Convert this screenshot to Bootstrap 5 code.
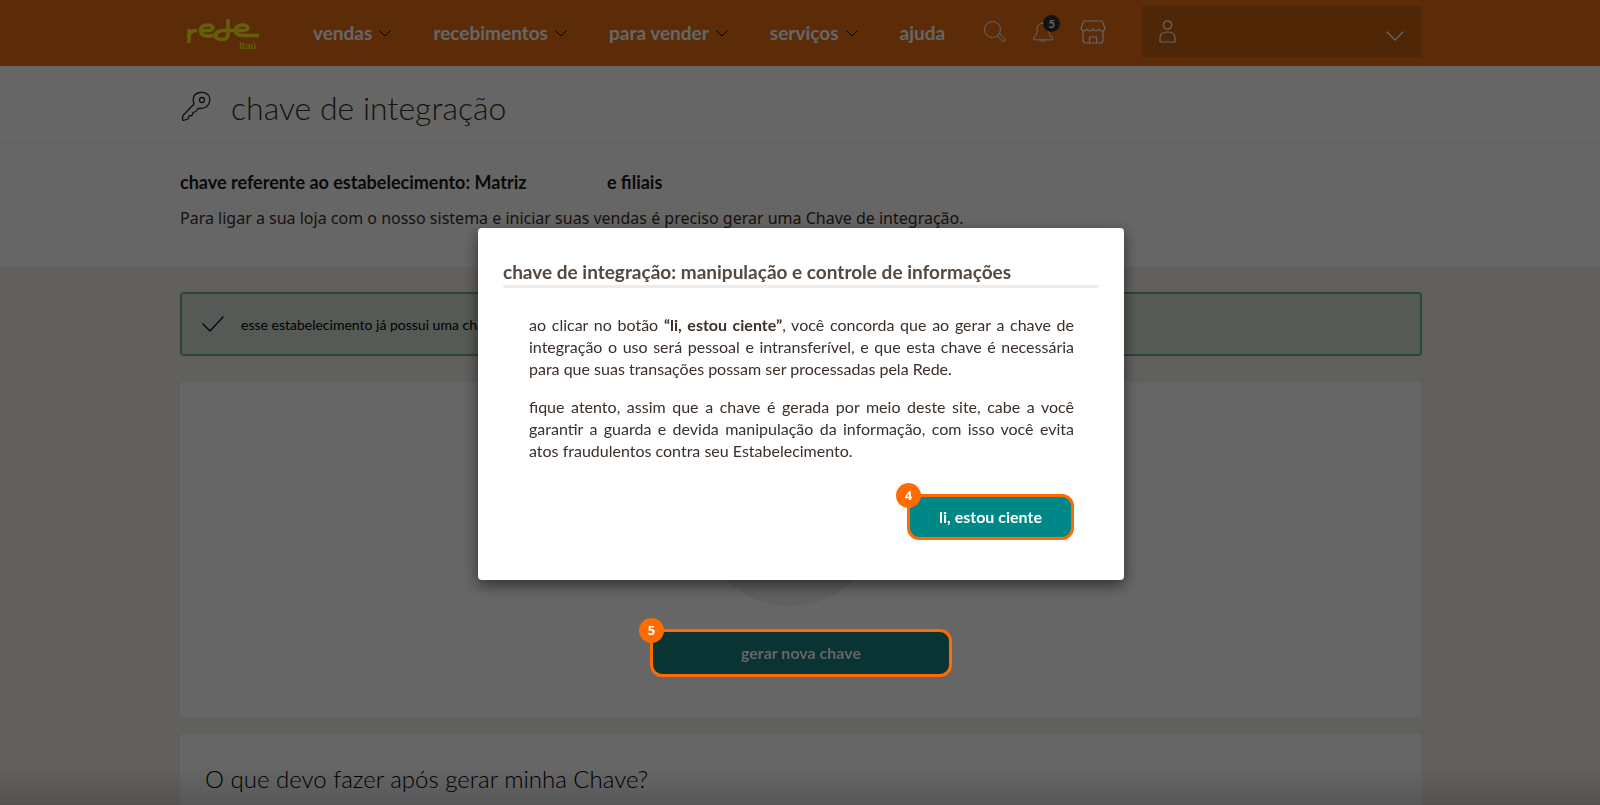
<!DOCTYPE html>
<html lang="pt-BR">
<head>
<meta charset="utf-8">
<meta name="viewport" content="width=device-width, initial-scale=1">
<title>chave de integração</title>
<link href="https://cdn.jsdelivr.net/npm/bootstrap@5.3.0/dist/css/bootstrap.min.css" rel="stylesheet">
<style>
  :root { --orange: #ff6b00; --teal: #008787; }
  body { font-family: Lato, "Noto Sans", sans-serif; background: #f5efe9; color: #3b2f29; height: 100vh; overflow: hidden; }
  svg { fill: none; stroke-linecap: round; stroke-linejoin: round; flex: none; display: block; }
  .wrap { width: 77.625%; margin-left: 11.25%; }
  .topbar { background: #e66c12; height: 66px; }
  .brand { width: 76px; margin: 0 53px 0 4px; }
  .menu { gap: 42px; }
  .menu a { color: #fff; font-size: 19px; font-weight: 700; line-height: 24px; text-decoration: none; display: flex; align-items: center; gap: 7px; }
  .tool { border: 0; background: none; padding: 0; position: relative; color: #fff; }
  .tools { gap: 27px; margin-left: 39px; margin-bottom: 2px; }
  .count { position: absolute; top: -6px; left: 10px; width: 17px; height: 17px; border-radius: 50%; background: #303030; font-size: 11px; font-weight: 700; line-height: 17px; }
  .account { width: 280px; height: 51px; background: #c56212; border: 0; padding: 0 18px 0 17px; color: #fff; margin-bottom: 3px; }
  .titlebar { height: 77px; border-bottom: 1px solid #ececec; }
  .titlebar h1 { font-size: 32px; font-weight: 300; line-height: 44px; margin: 8px 0 0; }
  .intro { height: 124px; padding-top: 26px; }
  .intro h2 { font-size: 18px; line-height: 26px; font-weight: 700; color: #1a1a1a; margin: 0 0 11px; }
  .intro p { font-family: "Noto Sans", sans-serif; font-size: 16px; line-height: 24px; margin: 0; }
  .blank { display: inline-block; width: 76px; }
  .notice { height: 64px; margin-top: 25px; border: 2px solid #68b391; border-radius: 4px; background: #d5e2d6; padding: 0 19px; gap: 16px; font-size: 14px; color: #000; }
  .panel { background: #fff; border-radius: 4px; }
  .panel-key { height: 335px; margin-top: 26px; padding-top: 40px; }
  .disc { width: 184px; height: 184px; border-radius: 50%; background: #efefef; margin-right: 22px; }
  .panel-faq { margin-top: 17px; padding: 28px 25px; height: 130px; }
  .panel-faq h2 { font-size: 24px; line-height: 34px; font-weight: 300; color: #000; margin: 0; }
  .step { position: relative; }
  .step-over { z-index: 1060; margin-top: 23px; }
  .step button { border: 3px solid var(--orange); border-radius: 12px; font-size: 16px; font-weight: 700; line-height: 24px; display: block; }
  .step-no { position: absolute; left: -11px; top: -11px; width: 25px; height: 25px; border-radius: 50%; background: var(--orange); color: #fff; font: 700 13px/25px "Noto Sans", sans-serif; text-align: center; }
  .btn-new { width: 302px; height: 48px; background: #0a3434; color: #666; }
  .btn-ok { width: 167px; height: 46px; background: var(--teal); color: #fff; }
  .shade { background: rgba(0,0,0,.6); z-index: 1040; }
  .foot-shade { height: 36px; z-index: 1041; background: linear-gradient(transparent, rgba(0,0,0,.14)); }
  .dialog-area { z-index: 1070; padding-top: 228px; pointer-events: none; }
  .dialog-box { width: 646px; height: 352px; background: #fff; border-radius: 4px; padding: 31px 25px 0; box-shadow: 0 5px 15px rgba(0,0,0,.55); pointer-events: auto; margin-left: 2px; }
  .dialog-box h2 { font-size: 19px; line-height: 26px; font-weight: 700; color: #54483f; margin: 0; border-bottom: 3px solid #efebe8; border-radius: 0 0 3px 3px; }
  .dialog-text { padding: 26px 25px 0 26px; font-size: 16px; line-height: 22px; text-align: justify; }
  .dialog-text p { margin: 0 0 16px; }
</style>
</head>
<body>
<header class="topbar">
  <div class="wrap d-flex align-items-center h-100">
    <a class="brand" href="#" aria-label="rede Itaú">
      <svg width="76" height="34" viewBox="0 0 76 34" stroke="#f9ef17" stroke-width="3.500" style="stroke-linecap:butt">
        <path d="M5 27V13M5 21Q5 14.500 13 14.500M18 14.500H25Q30 14 28.500 11Q27 8.500 23 9Q16 10 16.500 15Q17 20 24 20H27Q31 20 33 17Q35 14.500 39 14.500M44 3V18Q44 23.500 38 23.500Q31.500 23.500 31.500 19Q32 14.500 39 14.500H60Q65 14 63.500 11Q62 8.500 58 9Q51 10 51.500 15Q52 19.500 59 19.500H75"/>
        <text x="55" y="33" font-size="10" font-weight="700" fill="#f9ef17" stroke="none">Itaú</text>
      </svg>
    </a>
    <nav class="menu d-flex align-items-center">
      <a href="#">vendas <svg width="12" height="7" stroke="#000"><path d="M.7.7 6 6 11.300.7"/></svg></a>
      <a href="#">recebimentos <svg width="12" height="7" stroke="#000"><path d="M.7.7 6 6 11.300.7"/></svg></a>
      <a href="#">para vender <svg width="12" height="7" stroke="#000"><path d="M.7.7 6 6 11.300.7"/></svg></a>
      <a href="#">serviços <svg width="12" height="7" stroke="#000"><path d="M.7.7 6 6 11.300.7"/></svg></a>
      <a href="#">ajuda</a>
    </nav>
    <div class="tools d-flex align-items-center">
      <button class="tool" aria-label="buscar"><svg width="22" height="22" stroke="#fff"><circle cx="8.500" cy="8.500" r="8"/><path d="m14 14 1.500-1.500 5.500 5.500q1 2-1.500 3L14 15.500z"/></svg></button>
      <button class="tool" aria-label="notificações"><svg width="20" height="22" stroke="#fff"><path d="M.7 18.500v-2Q4 15 4 11V8Q4 3 10 2q6 1 6 6v3q0 4 3.300 5.500v2zM7 18.500q3 5 6 0M9 2q1-2 2 0"/></svg><span class="count">5</span></button>
      <button class="tool" aria-label="loja"><svg width="26" height="24" stroke="#fff" stroke-width="1.200"><path d="M4 1h18l3 7q-.5 3-3 3t-3-2q-1 2-3 2t-3-2q-1 2-3 2t-3-2q-1 2-3 2T1 8zM3 11v9q0 3 3 3h14q3 0 3-3v-9M9.500 23v-6h7v6"/></svg></button>
    </div>
    <button class="account ms-auto d-flex align-items-center justify-content-between" aria-label="conta">
      <svg width="17" height="23" stroke="#fff" stroke-width="1.200"><circle cx="8.500" cy="5" r="4.200"/><path d="M1 22v-4q0-6 7.500-6t7.500 6v4z"/></svg>
      <svg class="mt-2" width="18" height="10" stroke="#fff" stroke-width="1.300"><path d="m1 1 8 8 8-8"/></svg>
    </button>
  </div>
</header>

<div class="bg-white">
  <div class="titlebar">
    <div class="wrap d-flex align-items-center h-100">
      <svg class="me-3 mt-1" width="35" height="30" stroke="#30251f" stroke-width="1.300"><path d="M14 13Q11 3 20 1.500q9-1 10 7-1 9-10 9h-2l-2 3-3 1-1 3-3 .5-1 3-5 1.500q-1-2 0-5z"/><circle cx="22" cy="9" r="2.500"/></svg>
      <h1>chave de integração</h1>
    </div>
  </div>
  <section class="wrap intro">
    <h2>chave referente ao estabelecimento: Matriz <span class="blank"></span>e filiais</h2>
    <p>Para ligar a sua loja com o nosso sistema e iniciar suas vendas é preciso gerar uma Chave de integração.</p>
  </section>
</div>

<main class="wrap">
  <div class="notice d-flex align-items-center">
    <svg width="24" height="18" stroke="#000" stroke-width="1.200"><path d="m2 9 7 7L22 2"/></svg>
    <span>esse estabelecimento já possui uma chave</span>
  </div>
  <section class="panel panel-key d-flex flex-column align-items-center">
    <div class="disc"></div>
    <div class="step step-over">
      <button class="btn-new">gerar nova chave</button>
      <span class="step-no">5</span>
    </div>
  </section>
  <section class="panel panel-faq">
    <h2>O que devo fazer após gerar minha Chave?</h2>
  </section>
</main>

<div class="shade position-fixed top-0 start-0 w-100 h-100"></div>
<div class="foot-shade position-fixed bottom-0 start-0 w-100"></div>
<div class="dialog-area position-fixed top-0 start-0 w-100 d-flex justify-content-center">
  <div class="dialog-box" role="dialog" aria-labelledby="dialog-title">
    <h2 id="dialog-title">chave de integração: manipulação e controle de informações</h2>
    <div class="dialog-text">
      <p>ao clicar no botão <b>“li, estou ciente”</b>, você concorda que ao gerar a chave de integração o uso será pessoal e intransferível, e que esta chave é necessária para que suas transações possam ser processadas pela Rede.</p>
      <p>fique atento, assim que a chave é gerada por meio deste site, cabe a você garantir a guarda e devida manipulação da informação, com isso você evita atos fraudulentos contra seu Estabelecimento.</p>
      <div class="d-flex justify-content-end">
        <div class="step mt-3">
          <button class="btn-ok">li, estou ciente</button>
          <span class="step-no">4</span>
        </div>
      </div>
    </div>
  </div>
</div>
<script src="https://cdn.jsdelivr.net/npm/bootstrap@5.3.0/dist/js/bootstrap.bundle.min.js"></script>
</body>
</html>
